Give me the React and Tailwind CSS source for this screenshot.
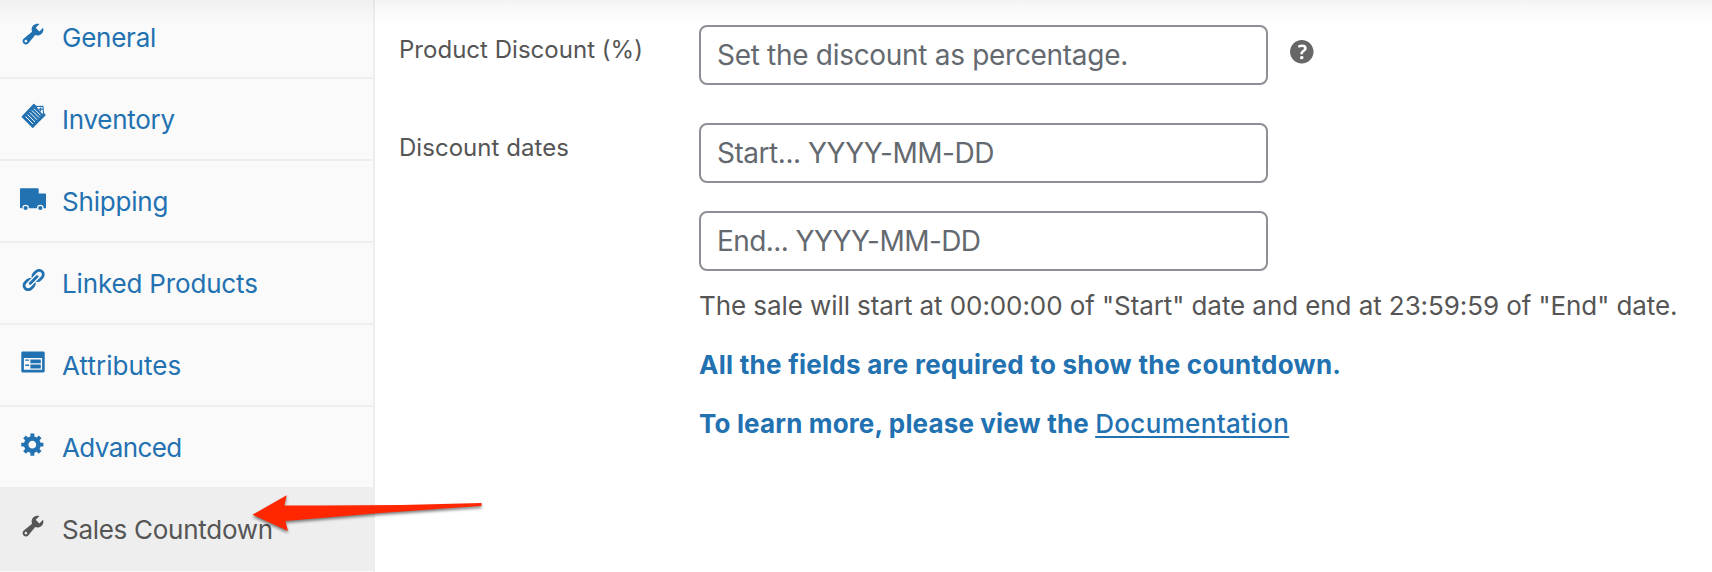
const icons = {
  wrench: 'M16.68 9.77c-1.34 1.34-3.3 1.67-4.95.99l-5.41 6.52c-.99.99-2.59.99-3.58 0s-.99-2.59 0-3.57l6.52-5.42c-.68-1.65-.35-3.61.99-4.95 1.28-1.28 3.12-1.62 4.72-1.06l-2.89 2.89 2.82 2.82 2.86-2.87c.53 1.58.18 3.39-1.08 4.65zM3.81 16.21c.4.39 1.04.39 1.43 0 .4-.4.4-1.04 0-1.43-.39-.4-1.03-.4-1.43 0-.39.39-.39 1.03 0 1.43z',
  link: 'M17.74 2.76c1.68 1.69 1.68 4.41 0 6.1l-1.53 1.52c-1.12 1.12-2.7 1.47-4.14 1.09l2.62-2.61.76-.77.76-.76c.84-.84.84-2.2 0-3.04-.84-.85-2.2-.85-3.04 0l-.77.76-3.38 3.38c-.37-1.44-.02-3.02 1.1-4.14l1.52-1.53c1.69-1.68 4.42-1.68 6.1 0zM8.59 13.43l5.34-5.34c.42-.42.42-1.1 0-1.52-.44-.43-1.13-.39-1.53 0l-5.33 5.34c-.42.42-.42 1.1 0 1.52.44.43 1.13.39 1.52 0zm-.76 2.29l4.14-4.15c.38 1.44.03 3.02-1.09 4.14l-1.52 1.53c-1.69 1.68-4.41 1.68-6.1 0-1.68-1.68-1.68-4.42 0-6.1l1.53-1.52c1.12-1.12 2.7-1.47 4.14-1.1l-4.14 4.15c-.85.84-.85 2.2 0 3.05.84.84 2.2.84 3.04 0z',
  form: 'M2 2h16c.55 0 1 .45 1 1v14c0 .55-.45 1-1 1H2c-.55 0-1-.45-1-1V3c0-.55.45-1 1-1zm15 14V7H3v9h14zM4 8v1h3V8H4zm4 0v3h8V8H8zm-4 4v1h3v-1H4zm4 0v3h8v-3H8z',
  gear: 'M18 12h-2.18c-.17.7-.44 1.35-.81 1.93l1.54 1.54-2.1 2.1-1.54-1.54c-.58.36-1.23.63-1.91.79V19H8v-2.18c-.68-.16-1.33-.43-1.91-.79l-1.54 1.54-2.12-2.12 1.54-1.54c-.36-.58-.63-1.23-.79-1.91H1V9.03h2.17c.16-.7.44-1.35.8-1.94L2.43 5.55l2.1-2.1 1.54 1.54c.58-.37 1.24-.64 1.93-.81V2h3v2.18c.68.16 1.33.43 1.91.79l1.54-1.54 2.12 2.12-1.54 1.54c.36.59.64 1.24.8 1.94H18V12zm-8.5 1.5c1.66 0 3-1.34 3-3s-1.34-3-3-3-3 1.34-3 3 1.34 3 3 3z',
  help: 'M17 10c0-3.87-3.14-7-7-7-3.87 0-7 3.13-7 7s3.13 7 7 7c3.86 0 7-3.13 7-7zm-6.3 1.48H9.14v-.43c0-.38.08-.7.24-.98s.46-.57.88-.89c.41-.29.68-.53.81-.71.14-.18.2-.39.2-.62 0-.25-.09-.44-.28-.58-.19-.13-.45-.19-.79-.19-.58 0-1.25.19-2 .57l-.64-1.28c.87-.49 1.8-.74 2.77-.74.81 0 1.45.2 1.92.58.48.39.71.91.71 1.55 0 .43-.09.8-.29 1.11-.19.32-.57.67-1.11 1.06-.38.28-.61.49-.71.63-.1.15-.15.34-.15.57v.35zm-1.47 2.74c-.18-.17-.27-.42-.27-.73 0-.33.08-.58.26-.75s.43-.25.77-.25c.32 0 .57.09.75.26s.27.42.27.74c0 .3-.09.55-.27.72-.18.18-.43.27-.75.27-.33 0-.58-.09-.76-.26z',
};

function Glyph({ name }) {
  return (
    <svg viewBox="0 0 20 20" className="size-[26px]" fill="currentColor" aria-hidden="true">
      <path fillRule="evenodd" d={icons[name]} />
    </svg>
  );
}

function TagIcon() {
  return (
    <svg viewBox="0 0 26 26" className="size-[26px]" fill="currentColor" aria-hidden="true">
      <path stroke="currentColor" strokeWidth="1.4" strokeLinejoin="round" d="M13.9 1.6L2.3 13.8 12.7 24.2 25 11.9z" />
      <path fill="#fafafa" stroke="currentColor" strokeWidth="1.1" strokeLinejoin="round" d="M15.6 3.5l7.3-.3.7 7.6-2 .4z" />
      <path fill="none" stroke="currentColor" strokeWidth="1.2" d="M18.6 6.2l4 .2M20.7 4.6l-.3 3.8" />
      <g stroke="#fafafa" strokeWidth="1">
        <path d="M5.5 13.5l7.4 7.4M7.6 11.5l7.4 7.4M9.7 9.4l7.4 7.4M11.8 7.3l7.4 7.4M13.9 5.7l6.6 6.6" />
      </g>
    </svg>
  );
}

function TruckIcon() {
  return (
    <svg viewBox="0 0 26 26" className="size-[26px]" fill="currentColor" aria-hidden="true">
      <path d="M.8 3.3h17c.5 0 .9.4.9.9v4.3h6.5c.5 0 .8.3.8.8v14H.8c-.5 0-.8-.3-.8-.8V4.1c0-.5.3-.8.8-.8z" />
      <circle cx="5.6" cy="23" r="3.3" fill="#fafafa" />
      <circle cx="20.3" cy="23" r="3.3" fill="#fafafa" />
      <circle cx="5.6" cy="23" r="2.1" />
      <circle cx="20.3" cy="23" r="2.1" />
    </svg>
  );
}

const tabs = [
  { label: 'General', icon: <Glyph name="wrench" />, tracking: 'tracking-[-0.24px]' },
  { label: 'Inventory', icon: <TagIcon />, tracking: 'tracking-[-0.26px]' },
  { label: 'Shipping', icon: <TruckIcon />, tracking: 'tracking-[-0.2px]' },
  { label: 'Linked Products', icon: <Glyph name="link" />, tracking: 'tracking-[-0.16px]' },
  { label: 'Attributes', icon: <Glyph name="form" />, tracking: 'tracking-[0.06px]' },
  { label: 'Advanced', icon: <Glyph name="gear" />, tracking: 'tracking-[-0.6px]' },
  { label: 'Sales Countdown', icon: <Glyph name="wrench" />, tracking: 'tracking-[-0.28px]', active: true },
];

function Tab({ label, icon, tracking, active }) {
  return (
    <li
      className={
        active
          ? 'flex h-[82px] shrink-0 items-start border-b-2 border-[#eee] bg-[#eee] pl-5 text-[#555]'
          : 'flex h-[82px] shrink-0 items-start border-b-2 border-[#eee] pl-5 text-[#2271b1]'
      }
    >
      <span className="mt-[23.7px] w-[42px]">{icon}</span>
      <span className={`mt-[21px] text-[26px] leading-[39px] whitespace-nowrap ${tracking}`}>{label}</span>
    </li>
  );
}

function Field({ placeholder, tracking }) {
  return (
    <input
      type="text"
      placeholder={placeholder}
      className={`block h-[60px] w-[569px] rounded-lg border-2 border-[#8c8f94] bg-white px-4 text-[28px] placeholder:text-[#646970] ${tracking}`}
    />
  );
}

export default function App() {
  return (
    <div className="relative flex h-[572px] w-[1712px] overflow-hidden bg-white font-[Inter,sans-serif] text-[#555]">
      <aside className="h-full w-[375px] shrink-0 overflow-hidden border-r-2 border-[#eee] bg-[#fafafa]">
        <ul className="-mt-[3px] flex flex-col">
          {tabs.map((tab) => (
            <Tab key={tab.label} {...tab} />
          ))}
        </ul>
      </aside>

      <main className="flex flex-col gap-[38px] pt-[25px] pl-[24px]">
        <div className="flex">
          <label className="mt-[7px] w-[300px] text-2xl leading-9 tracking-[0.02px]">Product Discount (%)</label>
          <Field placeholder="Set the discount as percentage." tracking="tracking-[-0.3px]" />
          <svg viewBox="0 0 20 20" className="mt-[9.6px] ml-[17px] size-[33.6px] text-[#666]" fill="currentColor" aria-hidden="true">
            <path d={icons.help} />
          </svg>
        </div>

        <div className="flex">
          <label className="mt-[7px] w-[300px] text-2xl leading-9 tracking-[0.04px]">Discount dates</label>
          <div className="flex flex-col">
            <Field placeholder="Start... YYYY-MM-DD" tracking="tracking-[-0.46px]" />
            <div className="mt-7">
              <Field placeholder="End... YYYY-MM-DD" tracking="tracking-[-0.57px]" />
            </div>
            <div className="mt-[15px] flex flex-col gap-5 text-[26px] leading-[39px] whitespace-nowrap">
              <p className="tracking-[-0.08px]">
                The sale will start at 00:00:00 of "Start" date and end at 23:59:59 of "End" date.
              </p>
              <p className="font-bold tracking-[0.26px] text-[#2271b1]">
                All the fields are required to show the countdown.
              </p>
              <p className="font-bold tracking-[0.15px] text-[#2271b1]">
                To learn more, please view the{' '}
                <a
                  href="#documentation"
                  className="font-medium tracking-[0.336px] underline decoration-2 underline-offset-[3px] [text-decoration-skip-ink:none]"
                >
                  Documentation
                </a>
              </p>
            </div>
          </div>
        </div>
      </main>

      <div className="pointer-events-none absolute inset-x-0 top-0 h-[26px] bg-linear-to-b from-black/4.5 via-black/1.5 to-transparent" />

      <svg
        viewBox="0 0 240 50"
        className="pointer-events-none absolute top-[490px] left-[248px] h-[50px] w-[240px] overflow-visible drop-shadow-[0_2px_1.5px_rgba(0,0,0,0.5)]"
        fill="#ff2600"
        aria-hidden="true"
      >
        <path d="M4.5 24.7L38.8 5.3L36.3 15.4Q135 16.2 233.5 13V15.9Q135 22 37.3 31L40 41Z" />
      </svg>
    </div>
  );
}
